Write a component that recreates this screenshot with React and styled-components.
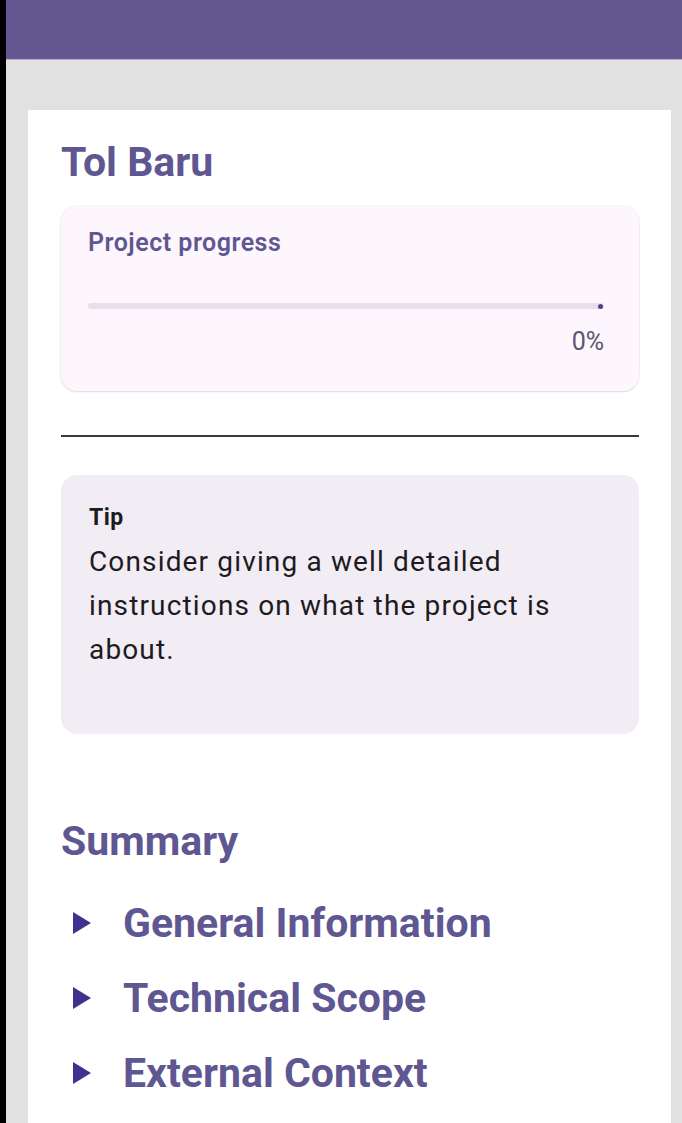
import styled, { createGlobalStyle } from "styled-components";

const GlobalStyle = createGlobalStyle`
  html, body {
    margin: 0;
    padding: 0;
    background: #000;
  }
  body {
    font-family: Roboto, "Noto Sans", sans-serif;
  }
  * {
    box-sizing: border-box;
  }
`;

const Frame = styled.div`
  margin-left: 6px;
  min-height: 100vh;
  background: #e1e1e1;
  display: flex;
  flex-direction: column;
`;

const AppBar = styled.header`
  height: 60px;
  background: #645690;
  border-bottom: 1px solid #b6abd6;
`;

const Content = styled.main`
  flex: 1;
  display: flex;
  flex-direction: column;
  padding: 50px 11px 0 22px;
`;

const Card = styled.section`
  flex: 1;
  background: #fff;
  padding: 28px 32px 40px 33px;
  display: flex;
  flex-direction: column;
`;

const Title = styled.h1`
  margin: 0;
  font-size: 41px;
  line-height: 48px;
  font-weight: 700;
  color: #5f5791;
`;

const ProgressCard = styled.div`
  margin-top: 20px;
  height: 185px;
  background: #fdf7fd;
  border-radius: 16px;
  box-shadow: 0 1px 2px rgba(0, 0, 0, 0.12), 0 0 0 1px rgba(0, 0, 0, 0.03);
  padding: 22px 35px 0 27px;
  display: flex;
  flex-direction: column;
`;

const ProgressLabel = styled.div`
  font-size: 25px;
  line-height: 30px;
  font-weight: 600;
  letter-spacing: 0.5px;
  color: #5f5791;
`;

const Track = styled.div`
  position: relative;
  margin-top: 45px;
  height: 6px;
  border-radius: 3px;
  background: #e6e0ea;
`;

const StopDot = styled.span`
  position: absolute;
  right: 1px;
  top: 0.5px;
  width: 5px;
  height: 5px;
  border-radius: 50%;
  background: #4e4285;
`;

const Percent = styled.div`
  margin-top: 18px;
  text-align: right;
  font-size: 25px;
  line-height: 30px;
  color: #5a5570;
`;

const Divider = styled.hr`
  margin: 44px 0 0;
  border: none;
  height: 2px;
  background: #3a3a3a;
`;

const TipCard = styled.div`
  margin-top: 38px;
  min-height: 259px;
  background: #f2ecf4;
  border-radius: 16px;
  padding: 29px 28px 30px 28px;
`;

const TipTitle = styled.div`
  font-size: 23px;
  line-height: 28px;
  font-weight: 700;
  letter-spacing: 0.5px;
  color: #1d1b20;
`;

const TipText = styled.p`
  margin: 8px 0 0;
  font-size: 28px;
  line-height: 44px;
  letter-spacing: 1.15px;
  color: #1d1b20;
`;

const SectionTitle = styled.h2`
  margin: 83px 0 0;
  font-size: 41px;
  line-height: 48px;
  font-weight: 700;
  color: #5f5791;
`;

const List = styled.ul`
  list-style: none;
  margin: 20px 0 0;
  padding: 0;
`;

const Item = styled.li`
  display: flex;
  align-items: center;
  height: 75px;
  padding-left: 12px;
  gap: 32px;
  font-size: 41px;
  font-weight: 700;
  color: #5f5791;
`;

const Arrow = () => (
  <svg width="18" height="22" viewBox="0 0 18 22">
    <path d="M0 0 L18 11 L0 22 Z" fill="#42308f" />
  </svg>
);

const sections = ["General Information", "Technical Scope", "External Context"];

export default function App() {
  return (
    <>
      <GlobalStyle />
      <Frame>
        <AppBar />
        <Content>
          <Card>
            <Title>Tol Baru</Title>
            <ProgressCard>
              <ProgressLabel>Project progress</ProgressLabel>
              <Track>
                <StopDot />
              </Track>
              <Percent>0%</Percent>
            </ProgressCard>
            <Divider />
            <TipCard>
              <TipTitle>Tip</TipTitle>
              <TipText>
                Consider giving a well detailed instructions on what the project is about.
              </TipText>
            </TipCard>
            <SectionTitle>Summary</SectionTitle>
            <List>
              {sections.map((s) => (
                <Item key={s}>
                  <Arrow />
                  <span>{s}</span>
                </Item>
              ))}
            </List>
          </Card>
        </Content>
      </Frame>
    </>
  );
}
